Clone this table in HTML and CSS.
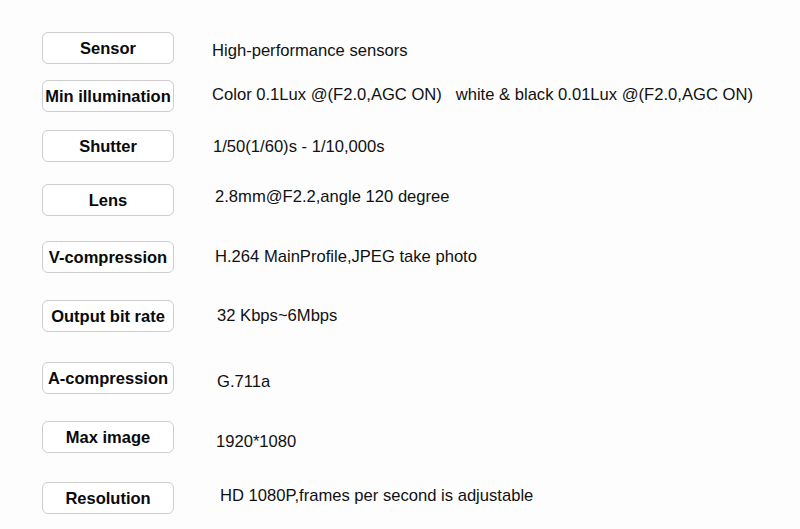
FILE: index.html
```html
<!DOCTYPE html>
<html lang="en">

<head>
  <meta charset="UTF-8">
  <meta name="viewport" content="width=device-width, initial-scale=1.0">
  <title>Specifications</title>
  <link rel="stylesheet" href="styles.css">
</head>

<body>
  <!-- spec sheet: label box on the left, value on the right -->
  <ul class="spec-list">
    <li class="spec">
      <span class="spec-label">Sensor</span>
      <span class="spec-value">High-performance sensors</span>
    </li>
    <li class="spec">
      <span class="spec-label">Min illumination</span>
      <span class="spec-value">Color 0.1Lux @(F2.0,AGC ON)&nbsp;&nbsp;&nbsp;white &amp; black 0.01Lux @(F2.0,AGC ON)</span>
    </li>
    <li class="spec">
      <span class="spec-label">Shutter</span>
      <span class="spec-value">1/50(1/60)s - 1/10,000s</span>
    </li>
    <li class="spec">
      <span class="spec-label">Lens</span>
      <span class="spec-value">2.8mm@F2.2,angle 120 degree</span>
    </li>
    <li class="spec">
      <span class="spec-label">V-compression</span>
      <span class="spec-value">H.264 MainProfile,JPEG take photo</span>
    </li>
    <li class="spec">
      <span class="spec-label">Output bit rate</span>
      <span class="spec-value">32 Kbps~6Mbps</span>
    </li>
    <li class="spec">
      <span class="spec-label">A-compression</span>
      <span class="spec-value">G.711a</span>
    </li>
    <li class="spec">
      <span class="spec-label">Max image</span>
      <span class="spec-value">1920*1080</span>
    </li>
    <li class="spec">
      <span class="spec-label">Resolution</span>
      <span class="spec-value">HD 1080P,frames per second is adjustable</span>
    </li>
  </ul>
</body>

</html>
```

FILE: styles.css
```css
* {
  margin: 0;
  padding: 0;
  box-sizing: border-box;
}

body {
  background: #fdfdfd;
  color: #111;
  font-family: "Liberation Sans", Arial, sans-serif;
}

.spec-list {
  list-style: none;
  padding: 32px 0 0 42px;
}

.spec {
  display: flex;
  align-items: flex-start;
}

.spec-label {
  flex: none;
  width: 132px;
  height: 32px;
  border: 1px solid #cdcdcd;
  border-radius: 6px;
  background: #fff;
  font-size: 16.5px;
  font-weight: bold;
  line-height: 30px;
  text-align: center;
  white-space: nowrap;
  color: #0a0a0a;
}

.spec-value {
  font-size: 16.6px;
  line-height: 20px;
  white-space: nowrap;
  margin-left: 38px;
  padding-top: 6px;
}

/* rows are not evenly spaced in the original sheet */
.spec:nth-child(1) .spec-value { padding-top: 9px; }
.spec:nth-child(2) { margin-top: 16px; }
.spec:nth-child(2) .spec-value { padding-top: 5px; }
.spec:nth-child(3) { margin-top: 18px; }
.spec:nth-child(3) .spec-value { padding-top: 7px; margin-left: 39px; }
.spec:nth-child(4) { margin-top: 22px; }
.spec:nth-child(4) .spec-value { padding-top: 3px; margin-left: 41px; }
.spec:nth-child(5) { margin-top: 25px; }
.spec:nth-child(5) .spec-value { margin-left: 41px; }
.spec:nth-child(6) { margin-top: 27px; }
.spec:nth-child(6) .spec-value { margin-left: 43px; }
.spec:nth-child(7) { margin-top: 30px; }
.spec:nth-child(7) .spec-value { padding-top: 10px; margin-left: 43px; }
.spec:nth-child(8) { margin-top: 27px; }
.spec:nth-child(8) .spec-value { padding-top: 11px; margin-left: 42px; }
.spec:nth-child(9) { margin-top: 29px; }
.spec:nth-child(9) .spec-value { padding-top: 4px; margin-left: 46px; }
```
